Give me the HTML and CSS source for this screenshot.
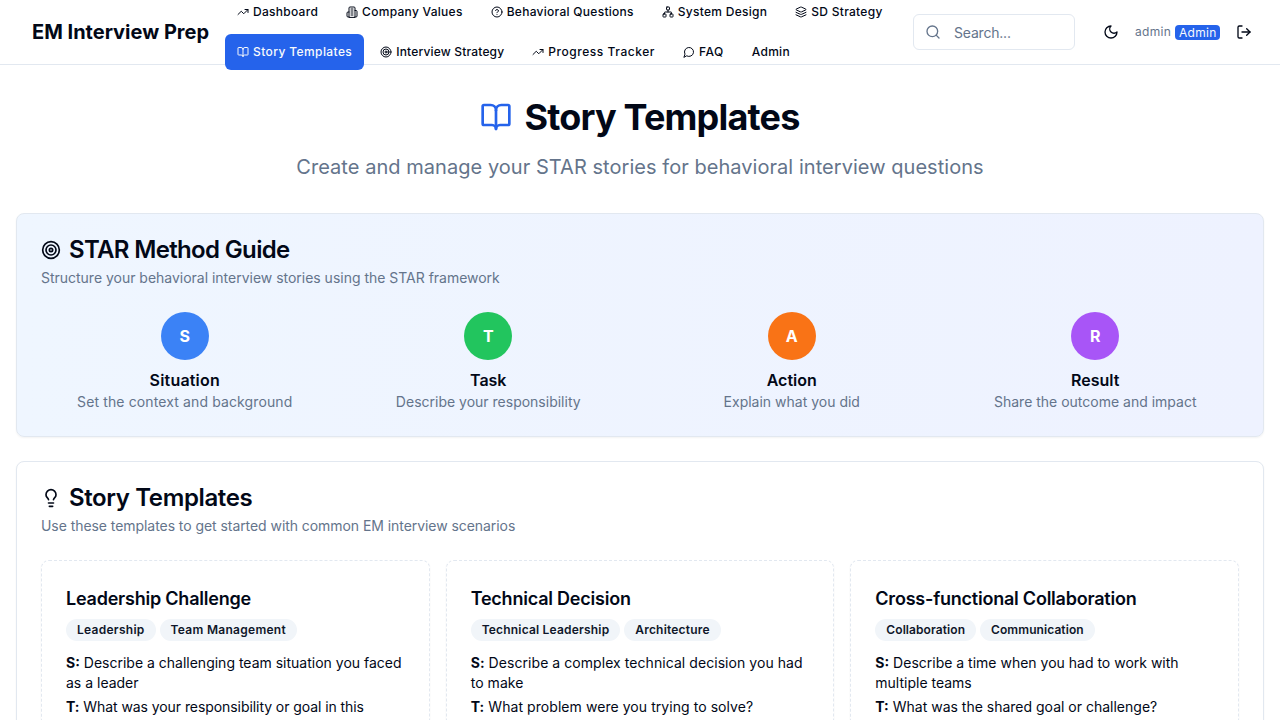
FILE: index.html
```html
<!DOCTYPE html>
<html lang="en">
<head>
<meta charset="utf-8">
<title>EM Interview Prep</title>
<link rel="stylesheet" href="styles.css">
</head>
<body>
<svg class="sprite" aria-hidden="true">
  <symbol id="trend" viewBox="0 0 24 24"><polyline points="22 7 13.5 15.5 8.5 10.5 2 17"/><polyline points="16 7 22 7 22 13"/></symbol>
  <symbol id="building" viewBox="0 0 24 24"><path d="M6 22V4a2 2 0 0 1 2-2h8a2 2 0 0 1 2 2v18Z"/><path d="M6 12H4a2 2 0 0 0-2 2v6a2 2 0 0 0 2 2h2"/><path d="M18 9h2a2 2 0 0 1 2 2v9a2 2 0 0 1-2 2h-2"/><path d="M10 6h4"/><path d="M10 10h4"/><path d="M10 14h4"/><path d="M10 18h4"/></symbol>
  <symbol id="help" viewBox="0 0 24 24"><circle cx="12" cy="12" r="10"/><path d="M9.09 9a3 3 0 0 1 5.83 1c0 2-3 3-3 3"/><path d="M12 17h.01"/></symbol>
  <symbol id="network" viewBox="0 0 24 24"><rect x="16" y="16" width="6" height="6" rx="1"/><rect x="2" y="16" width="6" height="6" rx="1"/><rect x="9" y="2" width="6" height="6" rx="1"/><path d="M5 16v-3a1 1 0 0 1 1-1h12a1 1 0 0 1 1 1v3"/><path d="M12 12V8"/></symbol>
  <symbol id="layers" viewBox="0 0 24 24"><path d="m12.83 2.18a2 2 0 0 0-1.66 0L2.6 6.08a1 1 0 0 0 0 1.83l8.58 3.91a2 2 0 0 0 1.66 0l8.58-3.9a1 1 0 0 0 0-1.83Z"/><path d="m22 17.65-9.17 4.16a2 2 0 0 1-1.66 0L2 17.65"/><path d="m22 12.65-9.17 4.16a2 2 0 0 1-1.66 0L2 12.65"/></symbol>
  <symbol id="book" viewBox="0 0 24 24"><path d="M12 7v14"/><path d="M3 18a1 1 0 0 1-1-1V4a1 1 0 0 1 1-1h5a4 4 0 0 1 4 4 4 4 0 0 1 4-4h5a1 1 0 0 1 1 1v13a1 1 0 0 1-1 1h-6a3 3 0 0 0-3 3 3 3 0 0 0-3-3z"/></symbol>
  <symbol id="target" viewBox="0 0 24 24"><circle cx="12" cy="12" r="10"/><circle cx="12" cy="12" r="6"/><circle cx="12" cy="12" r="2"/></symbol>
  <symbol id="message" viewBox="0 0 24 24"><path d="M7.9 20A9 9 0 1 0 4 16.1L2 22Z"/></symbol>
  <symbol id="search" viewBox="0 0 24 24"><circle cx="11" cy="11" r="8"/><path d="m21 21-4.3-4.3"/></symbol>
  <symbol id="moon" viewBox="0 0 24 24"><path d="M12 3a6 6 0 0 0 9 9 9 9 0 1 1-9-9Z"/></symbol>
  <symbol id="logout" viewBox="0 0 24 24"><path d="M9 21H5a2 2 0 0 1-2-2V5a2 2 0 0 1 2-2h4"/><polyline points="16 17 21 12 16 7"/><line x1="21" x2="9" y1="12" y2="12"/></symbol>
  <symbol id="bulb" viewBox="0 0 24 24"><path d="M15 14c.2-1 .7-1.7 1.5-2.5 1-.9 1.5-2.2 1.5-3.5A6 6 0 0 0 6 8c0 1 .2 2.2 1.5 3.5.7.7 1.3 1.5 1.5 2.5"/><path d="M9 18h6"/><path d="M10 22h4"/></symbol>
</svg>

<header class="topbar">
  <div class="brand">EM Interview Prep</div>
  <nav class="nav">
    <a class="nav-item"><svg class="icon"><use href="#trend"/></svg>Dashboard</a>
    <a class="nav-item"><svg class="icon"><use href="#building"/></svg>Company Values</a>
    <a class="nav-item"><svg class="icon"><use href="#help"/></svg>Behavioral Questions</a>
    <a class="nav-item"><svg class="icon"><use href="#network"/></svg>System Design</a>
    <a class="nav-item"><svg class="icon"><use href="#layers"/></svg>SD Strategy</a>
    <a class="nav-item active"><svg class="icon"><use href="#book"/></svg>Story Templates</a>
    <a class="nav-item strategy"><svg class="icon"><use href="#target"/></svg>Interview Strategy</a>
    <a class="nav-item progress"><svg class="icon"><use href="#trend"/></svg>Progress Tracker</a>
    <a class="nav-item faq"><svg class="icon"><use href="#message"/></svg>FAQ</a>
    <a class="nav-item">Admin</a>
  </nav>
  <div class="search"><svg class="icon"><use href="#search"/></svg><span>Search...</span></div>
  <button class="icon-button theme"><svg class="icon"><use href="#moon"/></svg></button>
  <div class="user"><span>admin</span><span class="role">Admin</span></div>
  <button class="icon-button logout"><svg class="icon"><use href="#logout"/></svg></button>
</header>

<main class="page">
  <div class="hero">
    <h1 class="hero-title"><svg class="icon"><use href="#book"/></svg>Story Templates</h1>
    <p class="hero-text">Create and manage your STAR stories for behavioral interview questions</p>
  </div>

  <section class="card guide">
    <h2 class="card-title"><svg class="icon"><use href="#target"/></svg>STAR Method Guide</h2>
    <p class="card-text">Structure your behavioral interview stories using the STAR framework</p>
    <div class="steps">
      <div class="step situation"><div class="letter blue">S</div><h3 class="step-title">Situation</h3><p class="step-text">Set the context and background</p></div>
      <div class="step"><div class="letter green">T</div><h3 class="step-title">Task</h3><p class="step-text">Describe your responsibility</p></div>
      <div class="step"><div class="letter orange">A</div><h3 class="step-title">Action</h3><p class="step-text">Explain what you did</p></div>
      <div class="step"><div class="letter purple">R</div><h3 class="step-title">Result</h3><p class="step-text">Share the outcome and impact</p></div>
    </div>
  </section>

  <section class="card library">
    <h2 class="card-title"><svg class="icon"><use href="#bulb"/></svg>Story Templates</h2>
    <p class="card-text">Use these templates to get started with common EM interview scenarios</p>
    <div class="templates">
      <article class="template leadership">
        <h3 class="template-title">Leadership Challenge</h3>
        <div class="tags"><span class="tag">Leadership</span><span class="tag">Team Management</span></div>
        <div class="prompts">
          <p><strong>S:</strong> Describe a challenging team situation you faced as a leader</p>
          <p class="task"><strong>T:</strong> What was your responsibility or goal in this situation?</p>
        </div>
      </article>
      <article class="template technical">
        <h3 class="template-title">Technical Decision</h3>
        <div class="tags"><span class="tag">Technical Leadership</span><span class="tag">Architecture</span></div>
        <div class="prompts">
          <p><strong>S:</strong> Describe a complex technical decision you had to make</p>
          <p><strong>T:</strong> What problem were you trying to solve?</p>
        </div>
      </article>
      <article class="template collaboration">
        <h3 class="template-title">Cross-functional Collaboration</h3>
        <div class="tags"><span class="tag">Collaboration</span><span class="tag">Communication</span></div>
        <div class="prompts">
          <p><strong>S:</strong> Describe a time when you had to work with multiple teams</p>
          <p><strong>T:</strong> What was the shared goal or challenge?</p>
        </div>
      </article>
    </div>
  </section>
</main>
</body>
</html>
```

FILE: styles.css
```css
* { box-sizing: border-box; margin: 0; padding: 0; }

body {
  height: 100vh;
  overflow: hidden;
  background: #fff;
  color: #020817;
  font-family: Inter, "Liberation Sans", sans-serif;
  font-size: 16px;
  line-height: 24px;
}

.sprite { display: none; }

.icon {
  width: 16px;
  height: 16px;
  flex: none;
  fill: none;
  stroke: currentColor;
  stroke-width: 2;
  stroke-linecap: round;
  stroke-linejoin: round;
}

.topbar {
  display: flex;
  align-items: center;
  height: 65px;
  padding: 0 20px 0 32px;
  border-bottom: 1px solid #e2e8f0;
}

.brand {
  width: 177px;
  margin-right: 16px;
  font-size: 20px;
  font-weight: 700;
  line-height: 28px;
  white-space: nowrap;
}

.nav {
  display: flex;
  flex: 1;
  flex-wrap: wrap;
  gap: 4px;
}

.nav-item {
  display: flex;
  align-items: center;
  gap: 4px;
  height: 36px;
  padding: 0 12px;
  border-radius: 6px;
  font-size: 12px;
  font-weight: 500;
  line-height: 16px;
  letter-spacing: 0.28px;
  white-space: nowrap;
}

.nav-item .icon { width: 12px; height: 12px; }
.nav-item.active { background: #2563eb; color: #f8fafc; letter-spacing: 0.4px; }
.nav-item.strategy { letter-spacing: 0.18px; }
.nav-item.progress { letter-spacing: 0.54px; }
.nav-item.faq { letter-spacing: 0.5px; }

.search {
  display: flex;
  align-items: center;
  gap: 13px;
  width: 162px;
  height: 36px;
  margin: 0 20px 0 16px;
  padding: 0 11px;
  border: 1px solid #e2e8f0;
  border-radius: 6px;
  color: #64748b;
  font-size: 14px;
  letter-spacing: -0.2px;
}

.search span { padding-top: 2px; }

.icon-button {
  display: flex;
  align-items: center;
  justify-content: center;
  width: 32px;
  height: 36px;
  border: 0;
  background: none;
  color: #020817;
}

.theme { margin-right: 8px; }

.user {
  display: flex;
  align-items: center;
  justify-content: space-between;
  width: 85px;
  margin-right: 8px;
  color: #64748b;
  font-size: 12px;
  line-height: 16px;
  letter-spacing: 0.3px;
  white-space: nowrap;
}

.role {
  width: 45px;
  padding: 0 4px;
  border-radius: 4px;
  background: #2563eb;
  color: #f8fafc;
  line-height: 15px;
}

.page { padding: 32px 16px; }

.hero { margin-bottom: 32px; text-align: center; }

.hero-title {
  display: flex;
  align-items: center;
  justify-content: center;
  gap: 12px;
  margin-bottom: 16px;
  font-size: 36px;
  font-weight: 700;
  line-height: 40px;
  letter-spacing: -0.8px;
}

.hero-title .icon { width: 32px; height: 32px; color: #2563eb; }
.hero-text { color: #64748b; font-size: 20px; line-height: 28px; letter-spacing: 0.045px; }

.card {
  margin-bottom: 24px;
  padding: 24px;
  border: 1px solid #e2e8f0;
  border-radius: 8px;
  background: #fff;
  box-shadow: 0 1px 2px rgba(0, 0, 0, 0.05);
}

.guide { background: linear-gradient(to right, #eff6ff, #eef2ff); }

.card-title {
  display: flex;
  align-items: center;
  gap: 8px;
  margin-bottom: 6px;
  font-size: 24px;
  font-weight: 600;
  line-height: 24px;
  letter-spacing: -0.66px;
}

.library .card-title { letter-spacing: -0.38px; }

.card-title .icon { width: 20px; height: 20px; }

.card-text {
  margin-bottom: 24px;
  color: #64748b;
  font-size: 14px;
  line-height: 20px;
  letter-spacing: -0.015px;
}

.library .card-text { letter-spacing: -0.06px; }

.steps { display: grid; grid-template-columns: repeat(4, 1fr); gap: 16px; }
.step { text-align: center; }

.letter {
  display: flex;
  align-items: center;
  justify-content: center;
  width: 48px;
  height: 48px;
  margin: 0 auto 8px;
  border-radius: 50%;
  color: #fff;
  font-weight: 700;
}

.blue { background: #3b82f6; }
.green { background: #22c55e; }
.orange { background: #f97316; }
.purple { background: #a855f7; }

.step-title { font-size: 16px; font-weight: 600; line-height: 24px; }
.step-text { color: #64748b; font-size: 14px; line-height: 20px; }
.situation .step-title { letter-spacing: 0.2px; }
.situation .step-text { letter-spacing: 0.12px; }

.templates { display: grid; grid-template-columns: repeat(3, 1fr); gap: 16px; }

.template {
  padding: 24px;
  border: 1px dashed #e2e8f0;
  border-radius: 8px;
  box-shadow: 0 1px 2px rgba(0, 0, 0, 0.05);
}

.template-title {
  margin-bottom: 6px;
  font-size: 18px;
  font-weight: 600;
  line-height: 28px;
  letter-spacing: -0.22px;
}

.tags { display: flex; gap: 4px; margin-bottom: 12px; }

.tag {
  padding: 3px 11px;
  border-radius: 11px;
  background: #f1f5f9;
  color: #0f172a;
  font-size: 12px;
  font-weight: 600;
  line-height: 16px;
}

.leadership .tag { letter-spacing: 0.28px; }
.technical .tag { letter-spacing: 0.19px; }
.collaboration .tag { letter-spacing: 0.08px; }

.prompts { display: grid; gap: 4px; font-size: 14px; line-height: 20px; }
.prompts strong { font-weight: 700; }
.technical .prompts { letter-spacing: 0.06px; }
.leadership .task { letter-spacing: -0.07px; }
```
